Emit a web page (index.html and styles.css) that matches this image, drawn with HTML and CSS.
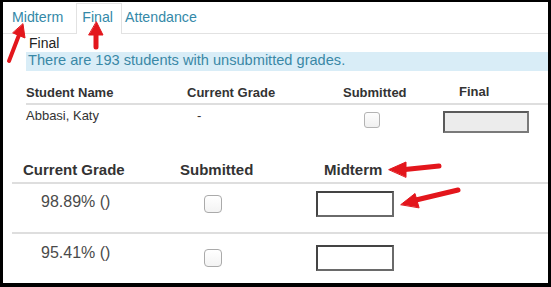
FILE: index.html
```html
<!DOCTYPE html>
<html>
<head>
<meta charset="utf-8">
<link rel="stylesheet" href="styles.css">
</head>
<body>
<div class="frame">
  <ul class="tabs">
    <li class="tab tab-midterm"><a>Midterm</a></li>
    <li class="tab tab-final active"><a>Final</a></li>
    <li class="tab tab-att"><a>Attendance</a></li>
  </ul>
  <div class="pane-title">Final</div>
  <div class="alert">There are 193 students with unsubmitted grades.</div>

  <div class="grid1">
    <div class="th">Student Name</div>
    <div class="th">Current Grade</div>
    <div class="th">Submitted</div>
    <div class="th th-final">Final</div>
    <div class="td td-text">Abbasi, Katy</div>
    <div class="td td-text td-dash">-</div>
    <div class="td td-cb"><input type="checkbox" class="cb cb-sm"></div>
    <div class="td td-input"><input type="text" class="box box-final"></div>
  </div>

  <div class="grid2">
    <div class="th2 th2-grade">Current Grade</div>
    <div class="th2 th2-sub">Submitted</div>
    <div class="th2 th2-mid">Midterm</div>

    <div class="td2 td2-grade r1">98.89% ()</div>
    <div class="td2 td2-cb r1"><input type="checkbox" class="cb cb-lg"></div>
    <div class="td2 td2-input r1"><input type="text" class="box box-mid"></div>

    <div class="td2 td2-grade r2 last">95.41% ()</div>
    <div class="td2 td2-cb r2 last"><input type="checkbox" class="cb cb-lg"></div>
    <div class="td2 td2-input r2 last"><input type="text" class="box box-mid"></div>
  </div>
</div>

<svg class="arrows" width="551" height="287" viewBox="0 0 551 287">
  <g fill="#e3161c" stroke="#e3161c" stroke-linecap="round">
    <line x1="9" y1="61" x2="19" y2="35" stroke-width="4"/>
    <polygon points="23,24 25,38 13,33" stroke-width="1" stroke-linejoin="round"/>
    <line x1="96" y1="47" x2="96" y2="34" stroke-width="5"/>
    <polygon points="96.5,22 103,35 89,35" stroke-width="1" stroke-linejoin="round"/>
    <line x1="405" y1="169.5" x2="439" y2="166" stroke-width="5"/>
    <polygon points="389,169.5 406,162 406,177" stroke-width="1" stroke-linejoin="round"/>
    <line x1="416" y1="200" x2="458" y2="190" stroke-width="5"/>
    <polygon points="401,204.5 415,193.5 419,207.5" stroke-width="1" stroke-linejoin="round"/>
  </g>
</svg>
</body>
</html>
```

FILE: styles.css
```css
html, body {
  margin: 0;
  padding: 0;
}
body {
  background: #000;
  width: 551px;
  height: 287px;
  overflow: hidden;
  position: relative;
  font-family: "Liberation Sans", Arial, sans-serif;
  color: #333;
}
.frame {
  margin: 2px 0 0 3px;
  width: 545px;
  height: 281px;
  background: #fff;
  overflow: hidden;
}

/* tabs */
.tabs {
  display: flex;
  list-style: none;
  margin: 0;
  padding: 0;
  height: 31px;
  border-bottom: 1px solid #e2e2e2;
}
.tab a {
  display: block;
  font-size: 14.2px;
  line-height: 20px;
  color: #3489a8;
  padding-top: 5px;
}
.tab-midterm {
  margin-left: 4px;
}
.tab-midterm a {
  padding-left: 5px;
  padding-right: 13px;
}
.tab.active {
  margin-top: 1px;
  height: 31px;
  border: 1px solid #e2e2e2;
  border-bottom: none;
  background: #fff;
  box-sizing: border-box;
  margin-bottom: -1px;
}
.tab-final a {
  padding-top: 3px;
  padding-left: 5px;
  padding-right: 8px;
}
.tab-att a {
  padding-left: 3px;
}

.pane-title {
  font-size: 14px;
  line-height: 18px;
  color: #222;
  padding-left: 26px;
}
.alert {
  margin-left: 23px;
  background: #d9edf7;
  color: #3a88a6;
  font-size: 14.6px;
  line-height: 17px;
  padding: 0 0 2px 2px;
}

/* first table */
.grid1 {
  margin: 13px 0 0 23px;
  display: grid;
  grid-template-columns: 161px 156px 100px 1fr;
}
.th {
  font-size: 13px;
  font-weight: bold;
  line-height: 18px;
  padding-bottom: 1px;
  border-bottom: 2px solid #dedede;
  color: #333;
}
.th-final {
  padding-left: 16px;
  margin-top: -1px;
  padding-bottom: 2px;
}
.td {
  font-size: 13px;
  line-height: 18px;
  color: #333;
}
.td-text {
  padding-top: 2px;
}
.td-dash {
  padding-left: 10px;
}
.td-cb {
  padding-top: 7px;
  padding-left: 21px;
}
.td-input {
  padding-top: 6px;
}

.cb {
  -webkit-appearance: none;
  appearance: none;
  display: block;
  margin: 0;
  box-sizing: border-box;
  background: #fff;
}
.cb-sm {
  width: 16px;
  height: 16px;
  border: 1px solid #b3b3b3;
  border-radius: 3px;
  background: linear-gradient(#fdfdfd, #f0f0f0);
}
.cb-lg {
  width: 18px;
  height: 18px;
  border: 1px solid #aaa;
  border-radius: 4px;
  background: linear-gradient(#fff, #f3f3f3);
}
.box {
  display: block;
  margin: 0;
  padding: 0;
  box-sizing: border-box;
  outline: none;
}
.box-final {
  width: 86px;
  height: 22px;
  background: #ececec;
  border: 2px solid #5a5a5a;
  border-right-color: #7a7a7a;
  border-bottom-color: #7a7a7a;
}
.box-mid {
  width: 78px;
  height: 26px;
  background: #fff;
  border: 2px solid #444;
  border-right-color: #6a6a6a;
  border-bottom-color: #6a6a6a;
}

/* second table */
.grid2 {
  margin: 27px 0 0 9px;
  display: grid;
  grid-template-columns: 151px 140px 1fr;
}
.th2 {
  font-size: 15px;
  font-weight: bold;
  line-height: 20px;
  padding-bottom: 2px;
  border-bottom: 2px solid #dedede;
  color: #333;
}
.th2-grade { padding-left: 11px; }
.th2-sub { padding-left: 17px; }
.th2-mid { padding-left: 21px; }

.td2 {
  font-size: 16px;
  line-height: 20px;
  color: #4a4a4a;
  box-sizing: border-box;
}
.td2.r1 {
  height: 50px;
  border-bottom: 2px solid #dedede;
}
.td2-grade { padding-left: 29px; }
.td2-cb { padding-left: 41px; }
.td2-input { padding-left: 13px; }

.td2-grade.r1 { padding-top: 8px; }
.td2-cb.r1 { padding-top: 11px; }
.td2-input.r1 { padding-top: 7px; }

.td2-grade.r2 { padding-top: 9px; }
.td2-cb.r2 { padding-top: 15px; }
.td2-input.r2 { padding-top: 11px; }

/* annotation arrows */
.arrows {
  position: absolute;
  left: 0;
  top: 0;
  pointer-events: none;
}
```
